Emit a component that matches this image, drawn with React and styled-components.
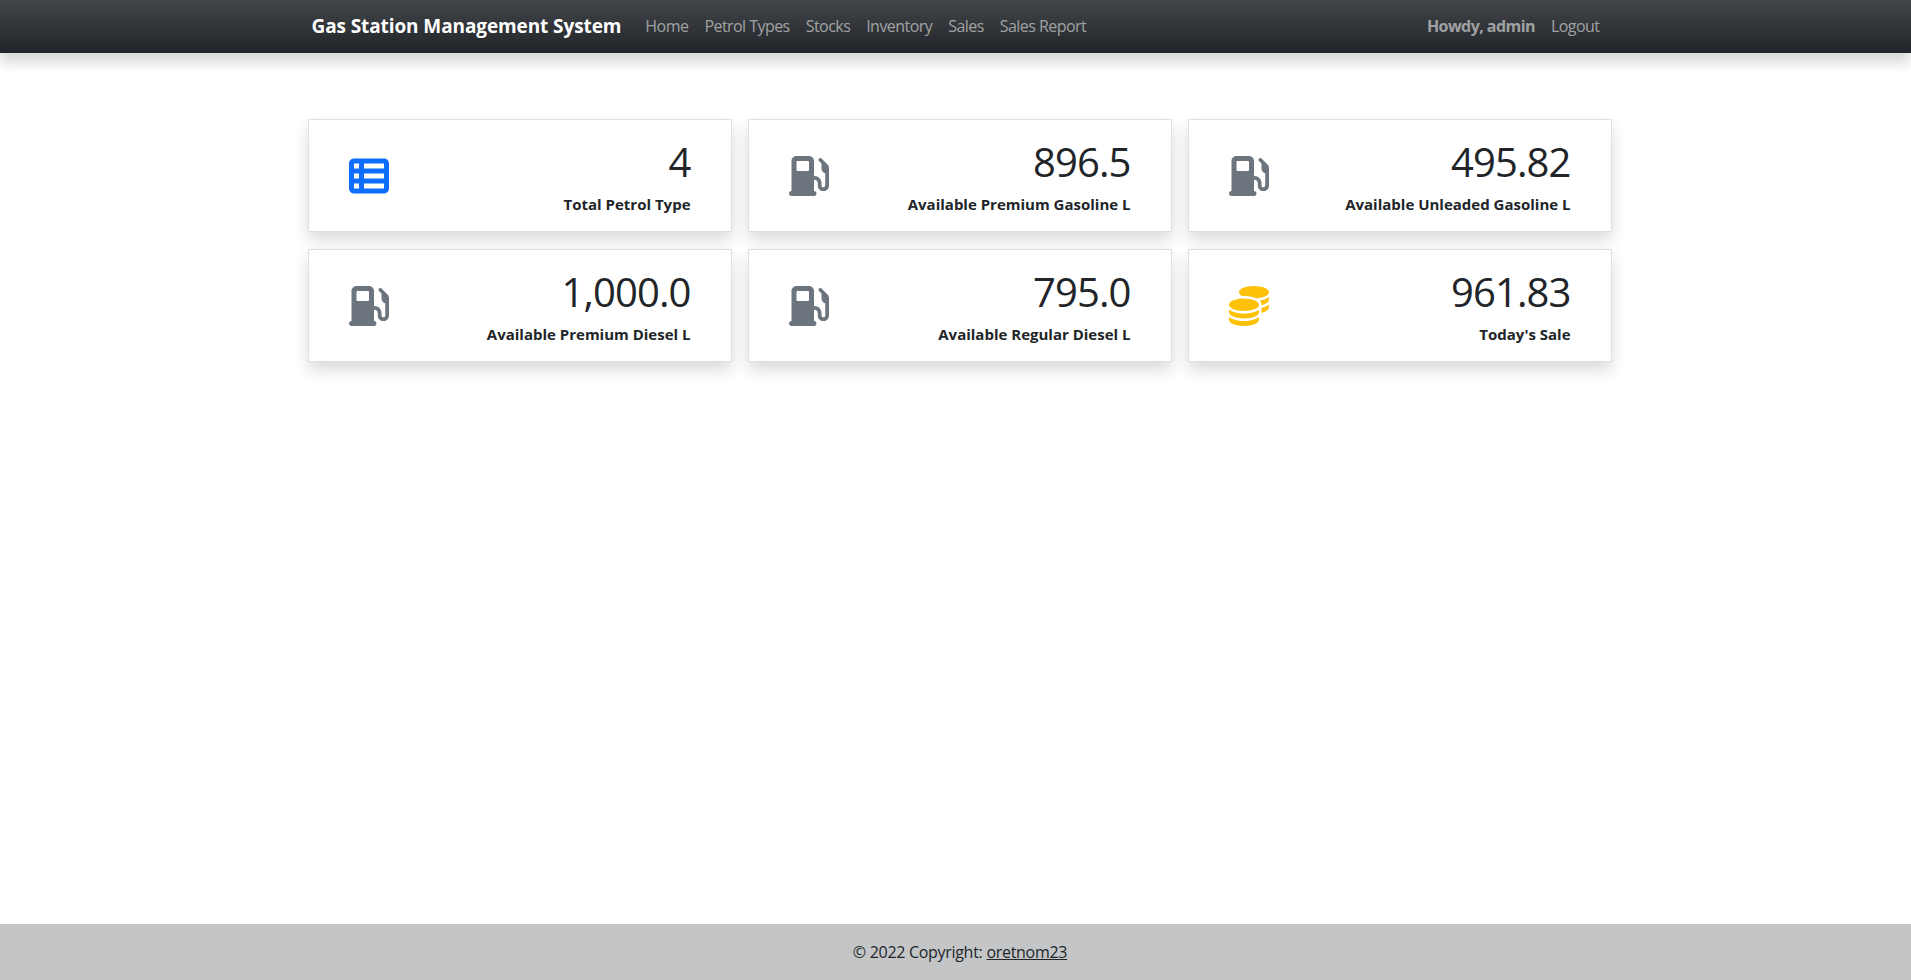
import React from 'react';
import styled, { createGlobalStyle } from 'styled-components';
import { FaGasPump, FaCoins, FaTableList } from 'react-icons/fa6';

const GlobalStyle = createGlobalStyle`
  * {
    box-sizing: border-box;
  }

  html, body, #root {
    height: 100%;
  }

  body {
    margin: 0;
    background: #fff;
    color: #212529;
    font-family: "Open Sans", "Noto Sans", sans-serif;
    font-size: 16px;
  }
`;

const Page = styled.div`
  display: flex;
  flex-direction: column;
  height: 980px;
  overflow: hidden;
`;

const Navbar = styled.nav`
  flex: none;
  height: 53px;
  background: #212529 linear-gradient(180deg, rgba(255, 255, 255, 0.15), rgba(255, 255, 255, 0));
  box-shadow: 0 10px 12px rgba(0, 0, 0, 0.15);
`;

const NavInner = styled.div`
  display: flex;
  align-items: center;
  width: 1320px;
  height: 100%;
  margin: 0 auto;
  padding: 0 8px 2px 16px;
`;

const Brand = styled.a`
  margin-right: 16px;
  color: #fff;
  font-size: 19px;
  font-weight: 700;
  letter-spacing: -0.1px;
  white-space: nowrap;
`;

const NavLinks = styled.div`
  display: flex;
  flex: 1;
`;

const NavLink = styled.a`
  padding: 8px;
  color: rgba(255, 255, 255, 0.55);
  font-size: 16px;
  letter-spacing: -0.55px;
  font-weight: ${(props) => (props.$bold ? 700 : 400)};
  white-space: nowrap;
`;

const Main = styled.main`
  flex: 1;
  width: 1320px;
  margin: 0 auto;
  padding: 66px 4px 0 12px;
`;

const CardGrid = styled.div`
  display: grid;
  grid-template-columns: repeat(3, 424px);
  grid-auto-rows: 113px;
  gap: 17px 16px;
`;

const StatCard = styled.div`
  display: flex;
  align-items: center;
  justify-content: space-between;
  padding: 0 40px;
  background: #fff;
  border: 1px solid rgba(0, 0, 0, 0.125);
  border-radius: 2px;
  box-shadow: 0 8px 16px rgba(0, 0, 0, 0.15);
`;

const IconWrap = styled.div`
  display: flex;
  font-size: 40px;
  color: ${(props) => props.$color};
`;

const StatText = styled.div`
  padding-top: 2px;
  text-align: right;
`;

const StatValue = styled.div`
  font-size: 40px;
  line-height: 48px;
  font-weight: 500;
  letter-spacing: -0.9px;
`;

const StatLabel = styled.div`
  margin-top: 8px;
  font-size: 15px;
  line-height: 21px;
  font-weight: 700;
`;

const Footer = styled.footer`
  flex: none;
  height: 56px;
  display: flex;
  align-items: center;
  justify-content: center;
  padding-left: 9px;
  background: #c4c5c7;
  font-size: 16px;
  letter-spacing: -0.3px;
`;

const FooterLink = styled.a`
  margin-left: 4px;
  color: #212529;
  text-decoration: underline;
`;

const links = ['Home', 'Petrol Types', 'Stocks', 'Inventory', 'Sales', 'Sales Report'];

const stats = [
  { value: '4', label: 'Total Petrol Type', Icon: FaTableList, color: '#0d6efd' },
  { value: '896.5', label: 'Available Premium Gasoline L', Icon: FaGasPump, color: '#6c757d' },
  { value: '495.82', label: 'Available Unleaded Gasoline L', Icon: FaGasPump, color: '#6c757d' },
  { value: '1,000.0', label: 'Available Premium Diesel L', Icon: FaGasPump, color: '#6c757d' },
  { value: '795.0', label: 'Available Regular Diesel L', Icon: FaGasPump, color: '#6c757d' },
  { value: '961.83', label: "Today's Sale", Icon: FaCoins, color: '#ffc107' },
];

const App = () => {
  return (
    <Page>
      <GlobalStyle />
      <Navbar>
        <NavInner>
          <Brand>Gas Station Management System</Brand>
          <NavLinks>
            {links.map((link) => (
              <NavLink key={link}>{link}</NavLink>
            ))}
          </NavLinks>
          <NavLink $bold>Howdy, admin</NavLink>
          <NavLink>Logout</NavLink>
        </NavInner>
      </Navbar>
      <Main>
        <CardGrid>
          {stats.map(({ value, label, Icon, color }) => (
            <StatCard key={label}>
              <IconWrap $color={color}>
                <Icon />
              </IconWrap>
              <StatText>
                <StatValue>{value}</StatValue>
                <StatLabel>{label}</StatLabel>
              </StatText>
            </StatCard>
          ))}
        </CardGrid>
      </Main>
      <Footer>
        © 2022 Copyright:<FooterLink>oretnom23</FooterLink>
      </Footer>
    </Page>
  );
};

export default App;
